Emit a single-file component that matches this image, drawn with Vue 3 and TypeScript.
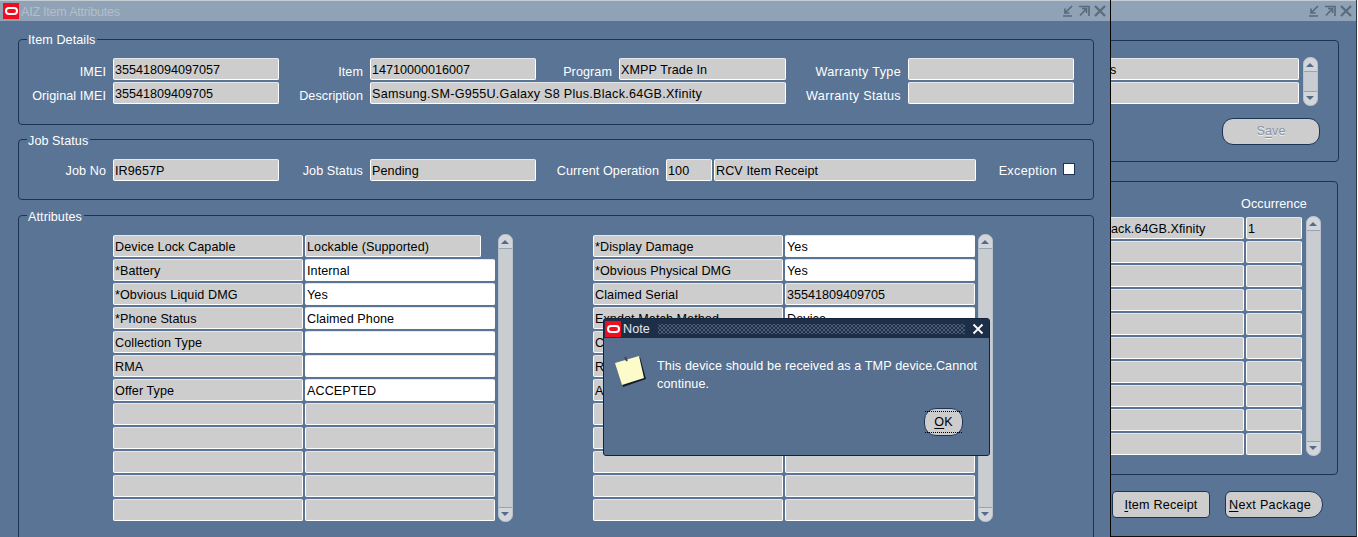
<script setup lang="ts">
const leftRows: [string, string, string][] = [
  ['Device Lock Capable', 'Lockable (Supported)', 'ro short'],
  ['*Battery', 'Internal', 'w'],
  ['*Obvious Liquid DMG', 'Yes', 'w'],
  ['*Phone Status', 'Claimed Phone', 'w'],
  ['Collection Type', '', 'w'],
  ['RMA', '', 'w'],
  ['Offer Type', 'ACCEPTED', 'w'],
  ['', '', ''],
  ['', '', ''],
  ['', '', ''],
  ['', '', ''],
  ['', '', '']
]
const rightRows: [string, string, string][] = [
  ['*Display Damage', 'Yes', 'w'],
  ['*Obvious Physical DMG', 'Yes', 'w'],
  ['Claimed Serial', '35541809409705', 'num'],
  ['Exndot Match Method', 'Device', 'w'],
  ['C', '', ''],
  ['R', '', ''],
  ['A', '', ''],
  ['', '', ''],
  ['', '', ''],
  ['', '', ''],
  ['', '', ''],
  ['', '', '']
]
const backRows: number[] = [1, 2, 3, 4, 5, 6, 7, 8, 9, 10]
</script>

<template>
  <div class="desk">
    <!-- back window -->
    <section class="win back">
      <header class="tbar">
        <span class="tbtns">
          <svg width="12" height="12" viewBox="0 0 12 12"><path d="M1 11H10M10 1 3.500 7.500M3 3.500V8H7.500" /></svg>
          <svg width="12" height="12" viewBox="0 0 12 12"><path d="M1 1.500H11V11M8.500 3.500 2 10.500M4 3.500H8.500V8" /></svg>
          <svg class="x" width="12" height="12" viewBox="0 0 12 12"><path d="M1 1 11 11M11 1 1 11" /></svg>
        </span>
      </header>
      <div class="bbody">
        <div class="bgroup bg1">
          <div class="bg1-main">
            <div class="bfields">
              <div class="fld first-s">s</div>
              <div class="fld"></div>
            </div>
            <div class="sb sb-short">
              <i class="up"></i>
              <i class="dn"></i>
            </div>
          </div>
          <div class="save-row"><button class="btn save"><span>S<u>a</u>ve</span></button></div>
        </div>
        <div class="bgroup bg2">
          <div class="occ-head">Occurrence</div>
          <div class="occ-main">
            <div class="occ-grid">
              <template v-for="r in backRows" :key="r">
                <div class="fld tail">{{ r === 1 ? 'ack.64GB.Xfinity' : '' }}</div>
                <div class="fld">{{ r === 1 ? '1' : '' }}</div>
              </template>
            </div>
            <div class="sb sb-occ">
              <i class="up"></i>
              <i class="dn"></i>
            </div>
          </div>
        </div>
        <div class="back-btns">
          <button class="btn receipt"><u>I</u>tem Receipt</button>
          <button class="btn next"><u>N</u>ext Package</button>
        </div>
      </div>
    </section>

    <!-- front window -->
    <section class="win front">
      <header class="tbar">
        <span class="logo"><i></i></span>
        <span class="ttl">AIZ Item Attributes</span>
        <span class="tbtns">
          <svg width="12" height="12" viewBox="0 0 12 12"><path d="M1 11H10M10 1 3.500 7.500M3 3.500V8H7.500" /></svg>
          <svg width="12" height="12" viewBox="0 0 12 12"><path d="M1 1.500H11V11M8.500 3.500 2 10.500M4 3.500H8.500V8" /></svg>
          <svg class="x" width="12" height="12" viewBox="0 0 12 12"><path d="M1 1 11 11M11 1 1 11" /></svg>
        </span>
      </header>
      <div class="fbody">
        <div class="group g-item">
          <span class="legend">Item Details</span>
          <div class="item-grid">
            <label>IMEI</label><div class="fld num">355418094097057</div>
            <label>Item</label><div class="fld num">14710000016007</div>
            <label>Program</label><div class="fld">XMPP Trade In</div>
            <label class="wide">Warranty Type</label><div class="fld"></div>
            <label>Original IMEI</label><div class="fld num">35541809409705</div>
            <label>Description</label><div class="fld span3 desc">Samsung.SM-G955U.Galaxy S8 Plus.Black.64GB.Xfinity</div>
            <label class="wide">Warranty Status</label><div class="fld"></div>
          </div>
        </div>
        <div class="group g-job">
          <span class="legend">Job Status</span>
          <div class="job-grid">
            <label>Job No</label><div class="fld">IR9657P</div>
            <label>Job Status</label><div class="fld">Pending</div>
            <label>Current Operation</label><div class="fld">100</div>
            <span></span>
            <div class="fld">RCV Item Receipt</div>
            <label class="exc wide">Exception</label><span class="chk"></span>
          </div>
        </div>
        <div class="group g-attr">
          <span class="legend">Attributes</span>
          <div class="attr-cols">
            <div class="attr-block">
              <div class="attr-grid">
                <template v-for="(r, i) in leftRows" :key="i">
                  <div class="fld">{{ r[0] }}</div>
                  <div class="fld" :class="r[2]">{{ r[1] }}</div>
                </template>
              </div>
              <div class="sb sb-attr"><i class="up"></i><i class="dn"></i></div>
            </div>
            <div class="attr-block">
              <div class="attr-grid">
                <template v-for="(r, i) in rightRows" :key="i">
                  <div class="fld">{{ r[0] }}</div>
                  <div class="fld" :class="r[2]">{{ r[1] }}</div>
                </template>
              </div>
              <div class="sb sb-attr"><i class="up"></i><i class="dn"></i></div>
            </div>
          </div>
        </div>
      </div>
    </section>

    <!-- note dialog -->
    <section class="note">
      <header class="ntbar">
        <span class="logo nlogo"><i></i></span>
        <span class="nttl">Note</span>
        <span class="dots"></span>
        <svg class="nx" width="12" height="12" viewBox="0 0 12 12"><path d="M1.500 1.500 10.500 10.500M10.500 1.500 1.500 10.500" /></svg>
      </header>
      <div class="nbody">
        <svg class="nicon" width="34" height="34" viewBox="0 0 34 34">
          <path d="M2 10 26 3 32 25 9 33Z" fill="#101c2c" />
          <path d="M1 9 25 2 30 24 8 31Z" fill="#fdfbc9" />
          <path d="M11 3 13 7" stroke="#445" stroke-width="2" fill="none" />
        </svg>
        <p>This device should be received as a TMP device.Cannot continue.</p>
      </div>
      <div class="nfoot"><button class="btn ok"><span><u>O</u>K</span></button></div>
    </section>
  </div>
</template>

<style>
html, body { margin: 0; padding: 0; background: #fff; overflow: hidden; }
</style>

<style scoped>
.desk {
  position: relative;
  width: 1358px;
  height: 537px;
  overflow: hidden;
  background: #fff;
  font-family: "Liberation Sans", Arial, sans-serif;
  font-size: 12.6px;
  letter-spacing: 0.08px;
  color: #000;
}
.win {
  position: absolute;
  top: 0;
  height: 537px;
  box-sizing: border-box;
  background: #5a7495;
  overflow: hidden;
}
.front { left: 0; width: 1111px; border-right: 1px solid #000; }
.back { left: 1100px; width: 257px; border-right: 1px solid #2a3a50; border-bottom: 1px solid #111; }
.tbar {
  height: 20px;
  border-top: 1px solid #c4ccd4;
  background: #8fa2b6;
  display: flex;
  align-items: center;
  box-sizing: content-box;
}
.logo {
  width: 16px;
  height: 16px;
  margin-left: 3px;
  background: #ee0e1e;
  display: flex;
  align-items: center;
  justify-content: center;
  flex: none;
}
.logo i {
  display: block;
  width: 9px;
  height: 4px;
  border: 2px solid #fff;
  border-radius: 5px;
}
.ttl { margin-left: 2px; padding-top: 2px; color: #b3bfcb; letter-spacing: -0.25px; }
.tbtns { margin-left: auto; margin-right: 4px; display: flex; align-items: center; gap: 4px; }
.tbtns svg { display: block; fill: none; stroke: #5a6b7c; stroke-width: 1.700; }
.tbtns svg.x { stroke-width: 2.200; }

.fbody { padding: 18px 0 0 18px; }
.group {
  position: relative;
  width: 1076px;
  box-sizing: border-box;
  border: 1px solid #1c3353;
  border-radius: 4px;
}
.legend {
  position: absolute;
  top: -7px;
  left: 8px;
  padding: 0 2px 0 1px;
  background: #5a7495;
  color: #fff;
  line-height: 15px;
}
.g-job .legend, .g-attr .legend { top: -6px; }
.g-item { height: 86px; padding-top: 18px; }
.g-job { height: 61px; margin-top: 14px; padding-top: 19px; }
.g-attr { height: 340px; margin-top: 15px; padding: 19px 0 0 94px; }

label {
  color: #fff;
  text-align: right;
  padding-right: 7px;
  line-height: 22px;
  height: 22px;
  box-sizing: border-box;
  white-space: nowrap;
}
.item-grid label { padding-top: 3px; }
.job-grid label { padding-top: 1px; }
.wide { letter-spacing: 0.34px; }
.desc { letter-spacing: 0.26px; }
.num { letter-spacing: 0; }
.fld {
  height: 22px;
  box-sizing: border-box;
  background: #cdcdcd;
  border: 1px solid #fff;
  border-top-color: #e4e7ea;
  border-radius: 2px;
  padding-left: 1px;
  line-height: 22px;
  white-space: nowrap;
  overflow: hidden;
  color: #000;
}
.fld.w { background: #fff; }
.fld.short { margin-right: 14px; }

.item-grid {
  display: grid;
  grid-template-columns: 94px 166px 91px 166px 83px 167px 122px 166px;
  row-gap: 2px;
}
.span3 { grid-column: 4 / 7; }
.job-grid {
  display: grid;
  grid-template-columns: 94px 166px 91px 166px 130px 46px 2px 262px 87px 12px;
  align-items: center;
}
.exc { padding-right: 6px; }
.chk {
  width: 12px;
  height: 12px;
  box-sizing: border-box;
  background: #fff;
  border: 1px solid #1c3353;
  margin-bottom: 2px;
}
.attr-cols { display: flex; gap: 80px; }
.attr-block { display: flex; gap: 3px; align-items: flex-start; }
.attr-grid {
  display: grid;
  grid-template-columns: 190px 190px;
  gap: 2px;
}

.sb {
  position: relative;
  width: 15px;
  box-sizing: border-box;
  background: #c9cdd2;
  border-radius: 7px;
  flex: none;
  margin-top: -1px;
  border: 1px solid #b8c0c9;
}
.sb-attr { height: 288px; }
.sb-short { height: 49px; margin-top: -1px; }
.sb-occ { height: 240px; }
.sb i { position: absolute; left: 0; right: 0; height: 13px; display: block; background: #d2d5da; }
.sb i::after {
  content: "";
  position: absolute;
  left: 2px;
  width: 0;
  height: 0;
  border-left: 4px solid transparent;
  border-right: 4px solid transparent;
}
.sb .up { top: 0; border-bottom: 1px solid #98a4b1; border-radius: 6px 6px 0 0; }
.sb .up::after { top: 5px; border-bottom: 4px solid #566c86; }
.sb .dn { bottom: 0; border-top: 1px solid #98a4b1; border-radius: 0 0 6px 6px; }
.sb .dn::after { top: 4px; border-top: 4px solid #566c86; }

.bbody { position: relative; height: 516px; }
.bgroup { position: absolute; left: -20px; box-sizing: border-box; border: 1px solid #1c3353; border-radius: 4px; }
.bg1 { top: 19px; width: 259px; height: 122px; padding: 17px 0 0 24px; }
.bg1-main { display: flex; gap: 4px; align-items: flex-start; }
.bfields { width: 194px; display: flex; flex-direction: column; gap: 2px; }
.first-s { padding-left: 4px; }
.save-row { margin-top: 12px; margin-left: 117px; }
.bg2 { top: 160px; width: 258px; height: 294px; padding: 14px 0 0 25px; }
.occ-head { margin-left: 135px; color: #fff; line-height: 16px; height: 21px; }
.occ-main { display: flex; gap: 4px; align-items: flex-start; }
.occ-grid { display: grid; grid-template-columns: 138px 56px; gap: 2px; }
.tail { padding-left: 4px; margin-left: 0; }
.back-btns {
  position: absolute;
  top: 470px;
  left: 12px;
  display: flex;
  gap: 15px;
}

.btn {
  box-sizing: border-box;
  height: 27px;
  width: 98px;
  padding: 0;
  background: #cdcdcd;
  border: 1px solid #1c3353;
  font: inherit;
  letter-spacing: inherit;
  color: #000;
  cursor: default;
}
.btn u { text-underline-offset: 2px; }
.save { border-radius: 11px; color: #8795a8; text-shadow: 0 1px 0 #eef0f2; padding-bottom: 2px; }
.receipt { border-radius: 4px; letter-spacing: 0.2px; }
.next { border-radius: 6px 13px 13px 6px; text-align: left; padding-left: 3px; letter-spacing: 0.3px; }
.ok { width: 39px; height: 28px; border-radius: 12px; }
.ok span {
  display: inline-block;
  padding: 2px 4px;
  border-top: 1px dotted #000;
  border-bottom: 1px dotted #000;
  line-height: 16px;
  width: 100%;
  box-sizing: border-box;
}

.note {
  position: absolute;
  left: 603px;
  top: 318px;
  width: 387px;
  height: 138px;
  box-sizing: border-box;
  background: #58708f;
  border: 1px solid #14233a;
  border-radius: 3px;
  display: flex;
  flex-direction: column;
}
.ntbar {
  height: 19px;
  background: #1d2f48;
  display: flex;
  align-items: center;
  flex: none;
}
.nlogo { width: 16px; height: 16px; margin-left: 1px; }
.nttl { color: #e6eaef; margin-left: 2px; }
.dots {
  flex: 1;
  height: 10px;
  margin: 0 7px 0 8px;
  background-image:
    radial-gradient(circle, #7f8fa2 0.6px, transparent 0.8px),
    radial-gradient(circle, #7f8fa2 0.6px, transparent 0.8px);
  background-size: 4px 4px;
  background-position: 0 0, 2px 2px;
}
.nx { margin-right: 5px; fill: none; stroke: #fff; stroke-width: 1.800; flex: none; }
.nbody { display: flex; align-items: flex-start; padding: 16px 10px 0 10px; gap: 9px; }
.nicon { flex: none; margin-top: 0; }
.nbody p {
  margin: 3px 0 0;
  color: #fff;
  line-height: 18px;
  font-size: 12.6px;
  letter-spacing: 0.12px;
}
.nfoot { margin-top: auto; padding: 0 26px 19px 0; display: flex; justify-content: flex-end; }
</style>
